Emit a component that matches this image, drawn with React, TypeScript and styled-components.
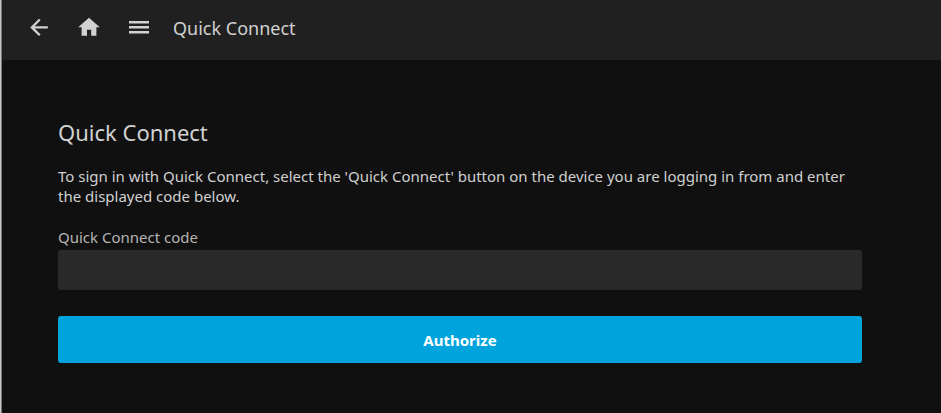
import React from 'react';
import styled, { createGlobalStyle } from 'styled-components';

const GlobalStyle = createGlobalStyle`
  *, *::before, *::after { box-sizing: border-box; }
  body { margin: 0; background: #101010; color: #d1d1d1; font-family: "Noto Sans", sans-serif; font-size: 15px; }
`;

const Page = styled.div`
  min-height: 100vh;
  border-left: 1px solid #c8c8cc;
  box-shadow: inset 1px 0 #77777b;
  padding-left: 1px;
`;

const Header = styled.header`
  display: flex;
  align-items: center;
  height: 60px;
  padding: 0 12px;
  background: #202020;
`;

const IconButton = styled.button`
  display: flex;
  align-items: center;
  justify-content: center;
  width: 50px;
  height: 50px;
  padding: 0 0 6px;
  border: 0;
  background: none;
  color: inherit;
  cursor: pointer;
`;

const HeaderTitle = styled.h1`
  margin: 0 0 0 9px;
  padding-bottom: 4px;
  font-size: 18px;
  font-weight: 400;
  line-height: 24px;
`;

const Form = styled.form`
  display: flex;
  flex-direction: column;
  padding: 58px 79px 48px 56px;
`;

const Heading = styled.h2`
  margin: 0 0 20px;
  font-size: 22px;
  font-weight: 400;
  line-height: 28px;
`;

const Description = styled.p`
  margin: 0 0 20px;
  line-height: 20px;
`;

const Label = styled.label`
  margin-bottom: 2px;
  line-height: 22px;
  color: #b5b5b5;
`;

const CodeInput = styled.input`
  width: 100%;
  height: 40px;
  margin-bottom: 26px;
  padding: 0 8px;
  border: 0;
  border-radius: 3px;
  background: #292929;
  color: inherit;
  font: inherit;
`;

const SubmitButton = styled.button`
  height: 47px;
  border: 0;
  border-radius: 3px;
  background: #00a4dc;
  color: #fff;
  font: inherit;
  font-weight: 700;
  cursor: pointer;
`;

const Icon = ({ d }: { d: string }) => (
  <svg width="26" height="26" viewBox="0 0 26 26" fill="currentColor" aria-hidden="true">
    <path d={d} />
  </svg>
);

export default function App() {
  return (
    <Page>
      <GlobalStyle />
      <Header>
        <IconButton type="button" aria-label="Back">
          <Icon d="M21.8 12.2H8.7L14.6 6.3L13 4.7L4.2 13.4L13 22.1L14.6 20.5L8.7 14.6H21.8z" />
        </IconButton>
        <IconButton type="button" aria-label="Home">
          <Icon d="M11 21.8V15.7H15.2V21.8H20.4V13.2H23.8L13 3.8L2.2 13.2H5.6V21.8z" />
        </IconButton>
        <IconButton type="button" aria-label="Menu">
          <Icon d="M3 7h20v2.6H3zM3 12h20v2.6H3zM3 17h20v2.6H3z" />
        </IconButton>
        <HeaderTitle>Quick Connect</HeaderTitle>
      </Header>
      <Form onSubmit={(event) => event.preventDefault()}>
        <Heading>Quick Connect</Heading>
        <Description>
          To sign in with Quick Connect, select the 'Quick Connect' button on the device you are
          logging in from and enter the displayed code below.
        </Description>
        <Label htmlFor="code">Quick Connect code</Label>
        <CodeInput id="code" type="text" />
        <SubmitButton type="submit">Authorize</SubmitButton>
      </Form>
    </Page>
  );
}
